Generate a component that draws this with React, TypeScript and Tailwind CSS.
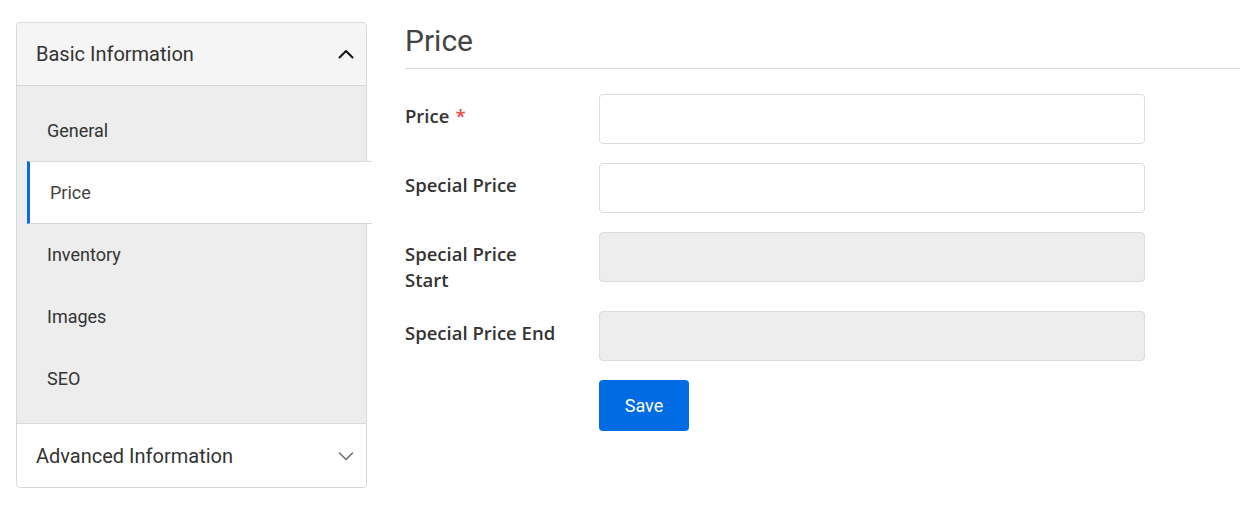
const sub = ["General", "Price", "Inventory", "Images", "SEO"];

function Chevron({ up, className }: { up?: boolean; className?: string }) {
  return (
    <svg width="16" height="10" viewBox="0 0 16 10" className={className} fill="none">
      <polyline
        points={up ? "1.5,8.5 8,2 14.5,8.5" : "1.5,2 8,8.5 14.5,2"}
        stroke="currentColor"
        strokeWidth={up ? 2 : 1.6}
        strokeLinecap="round"
        strokeLinejoin="round"
      />
    </svg>
  );
}

const rows = [
  { label: "Price", required: true, disabled: false },
  { label: "Special Price", disabled: false },
  { label: "Special Price Start", disabled: true },
  { label: "Special Price End", disabled: true },
];

export default function App() {
  return (
    <div
      className="flex items-start w-[1240px] h-[510px] bg-white pl-[16px] pt-[22px] overflow-hidden"
      style={{ fontFamily: "Roboto, sans-serif" }}
    >
      {/* sidebar */}
      <aside className="w-[351px] shrink-0 rounded-[4px] border border-[#d5d8df] text-[#333]">
        <div className="flex h-[63px] items-center justify-between rounded-t-[4px] border-b border-[#d5d8df] bg-[#f5f5f5] pl-[19px] pr-[12px]">
          <span className="text-[20px]">Basic Information</span>
          <Chevron up className="text-[#111]" />
        </div>
        <ul className="bg-[#ededed] pt-[13px] pb-[14px] border-b border-[#d5d8df]">
          {sub.map((s) =>
            s === "Price" ? (
              <li
                key={s}
                className="relative ml-[10px] mr-[-6px] mb-[-1px] flex h-[63px] items-center border-y border-l-[3px] border-y-[#d5d8df] border-l-[#0a6ce6] bg-white pl-[20px] text-[18px] text-[#444]"
              >
                {s}
              </li>
            ) : (
              <li key={s} className="flex h-[62px] items-center pl-[30px] text-[18px]">
                {s}
              </li>
            )
          )}
        </ul>
        <div className="flex h-[63px] items-center justify-between rounded-b-[4px] bg-white pl-[19px] pr-[12px]">
          <span className="text-[20px]">Advanced Information</span>
          <Chevron className="text-[#6f6f6f]" />
        </div>
      </aside>

      {/* content */}
      <main className="ml-[38px] flex-1 pt-[3px]">
        <h1 className="border-b border-[#d5d8df] pb-[12px] text-[30px] leading-[31px] text-[#444]">
          Price
        </h1>
        <form className="mt-[25px] flex flex-col gap-[19px]" style={{ fontFamily: "'Open Sans', sans-serif" }}>
          {rows.map((r) => (
            <div key={r.label} className="flex items-start">
              <label className="w-[194px] shrink-0 pr-[38px] pt-[9px] text-[18.5px] font-semibold leading-[25.5px] text-[#333]">
                {r.label}
                {r.required && <span className="ml-[6px] text-[#e64545]">*</span>}
              </label>
              <input
                disabled={r.disabled}
                className={
                  r.disabled
                    ? "h-[50px] w-[546px] rounded-[4px] border border-[#dcdcdc] bg-[#ededed]"
                    : "h-[50px] w-[546px] rounded-[4px] border border-[#dcdcdc] bg-white"
                }
              />
            </div>
          ))}
          <div className="flex">
            <div className="w-[194px] shrink-0" />
            <button
              type="button"
              className="h-[51px] w-[90px] rounded-[4px] bg-[#006be3] text-[18px] text-white"
              style={{ fontFamily: "Roboto, sans-serif" }}
            >
              Save
            </button>
          </div>
        </form>
      </main>
    </div>
  );
}
